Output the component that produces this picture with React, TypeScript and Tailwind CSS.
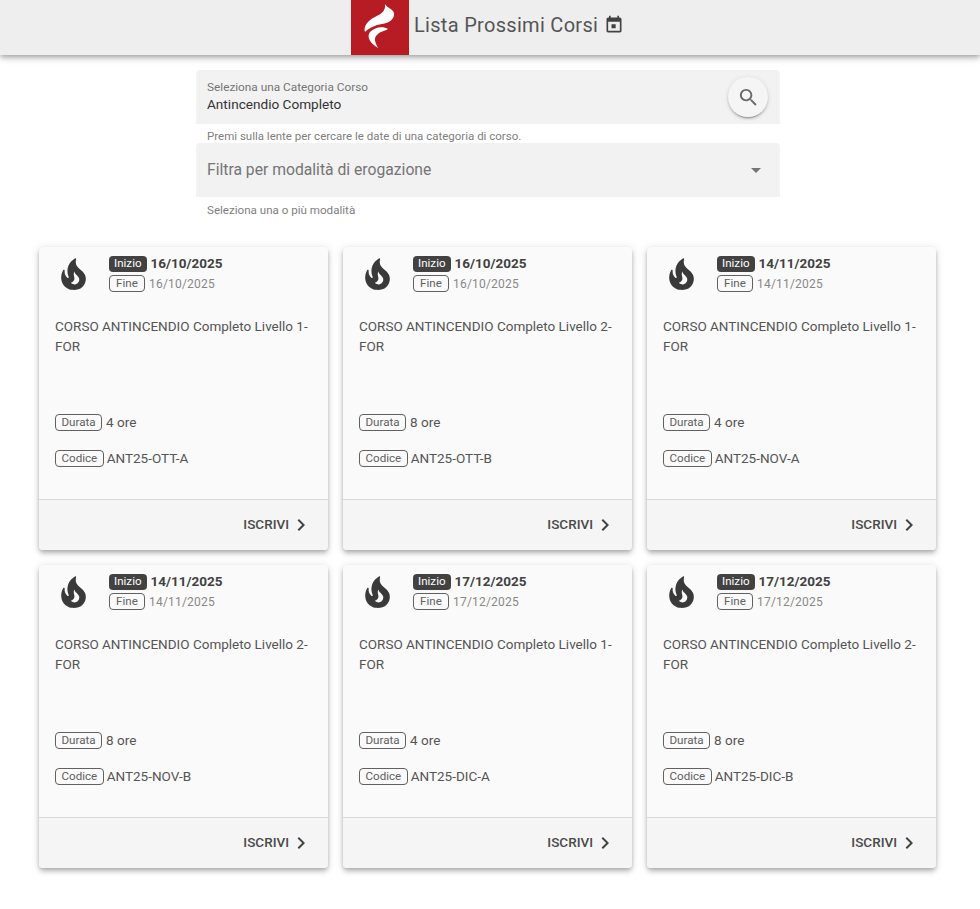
const FIRE = "M19.48,12.35c-1.57-4.08-7.16-4.3-5.81-10.23c0.1-0.44-0.37-0.78-0.75-0.55C9.29,3.71,6.68,8,8.87,13.62c0.18,0.46-0.36,0.89-0.75,0.59c-1.81-1.37-2-3.34-1.84-4.75c0.06-0.52-0.62-0.77-0.91-0.34C4.69,10.16,4,11.84,4,14.37c0.38,5.6,5.11,7.32,6.81,7.54c2.43,0.31,5.06-0.14,6.95-1.87C19.84,18.11,20.6,15.03,19.48,12.35z M10.2,17.38c1.44-0.35,2.18-1.39,2.38-2.31c0.33-1.43-0.96-2.83-0.09-5.09c0.33,1.87,3.27,3.04,3.27,5.08C15.84,17.59,13.1,19.76,10.2,17.38z";

const courses = [
  { start: "16/10/2025", level: 1, hours: 4, code: "ANT25-OTT-A" },
  { start: "16/10/2025", level: 2, hours: 8, code: "ANT25-OTT-B" },
  { start: "14/11/2025", level: 1, hours: 4, code: "ANT25-NOV-A" },
  { start: "14/11/2025", level: 2, hours: 8, code: "ANT25-NOV-B" },
  { start: "17/12/2025", level: 1, hours: 4, code: "ANT25-DIC-A" },
  { start: "17/12/2025", level: 2, hours: 8, code: "ANT25-DIC-B" },
];

function Tag({ children }: { children: React.ReactNode }) {
  return (
    <span className="inline-flex h-[17px] min-w-[36px] items-center justify-center rounded-[4px] border border-[#616161] px-[5.5px] text-[11.6px] leading-none text-[#616161]">
      {children}
    </span>
  );
}

function Card({ c }: { c: (typeof courses)[number] }) {
  return (
    <div className="flex h-[303px] flex-col rounded-[4px] bg-[#fafafa] shadow-[0_2px_4px_-1px_rgba(0,0,0,0.2),0_4px_5px_0_rgba(0,0,0,0.14),0_1px_10px_0_rgba(0,0,0,0.12)]">
      <div className="flex h-[252px] flex-col px-4">
        <div className="flex h-[61px] pt-[8px]">
          <svg viewBox="0 0 24 24" className="mt-[1px] h-[37px] w-[37px] shrink-0" fill="#3a3a3a">
            <path d={FIRE} />
          </svg>
          <div className="ml-[17px] flex flex-col gap-[3px]">
            <div className="flex h-[17px] items-center gap-[4px]">
              <span className="inline-flex h-[16px] items-center rounded-[4px] bg-[#424242] px-[5px] text-[11.6px] leading-none text-white">
                Inizio
              </span>
              <span className="text-[13.5px] font-bold leading-none text-[#424242]">{c.start}</span>
            </div>
            <div className="flex h-[17px] items-center gap-[4px]">
              <Tag>Fine</Tag>
              <span className="text-[12px] leading-none tracking-[0.2px] text-[#888888]">{c.start}</span>
            </div>
          </div>
        </div>
        <p className="mt-[8px] h-[98px] text-[13.5px] leading-[20px] text-[#555555]">
          {`CORSO ANTINCENDIO Completo Livello ${c.level}-FOR`}
        </p>
        <div className="flex h-[36px] items-start text-[13.5px] leading-[17px] text-[#555555]">
          <Tag>Durata</Tag>
          <span className="ml-[4px]">{`${c.hours} ore`}</span>
        </div>
        <div className="flex items-start text-[13.5px] leading-[17px] text-[#555555]">
          <Tag>Codice</Tag>
          <span className="ml-[3px]">{c.code}</span>
        </div>
      </div>
      <div className="flex h-[51px] items-center justify-end rounded-b-[4px] border-t border-[#d9d9d9] bg-[#f5f5f5] pr-[18px]">
        <span className="text-[13.5px] font-medium leading-none text-[#4a4a4a]">ISCRIVI</span>
        <svg viewBox="0 0 24 24" className="h-[24px] w-[24px] -mr-[3px]" fill="#424242">
          <path d="M10 6L8.59 7.41 13.17 12l-4.58 4.59L10 18l6-6z" />
        </svg>
      </div>
    </div>
  );
}

export default function App() {
  return (
    <div className="min-h-[909px] bg-white font-['Roboto',sans-serif]">
      <header className="flex h-[55px] items-stretch justify-center bg-[#eeeeee] shadow-[0_2px_4px_-1px_rgba(0,0,0,0.2),0_4px_5px_0_rgba(0,0,0,0.14),0_1px_10px_0_rgba(0,0,0,0.12)]">
        <div className="flex w-[980px] items-stretch pl-[351px]">
          <div className="flex w-[58px] items-center justify-center bg-[#b71c24]">
            <svg viewBox="0 0 58 55" className="h-[55px] w-[58px]" fill="white">
              <path d="M34 4C36 8 41 8 43 13C44 19 38 23 31 24C24 25 18 28 14 32C12 27 17 20 24 17C30 14 35 11 34 4z" />
              <path d="M37 29C32 26 24 27 19 32C15 37 20 44 27 48C24 42 22 38 27 34C30 31 34 31 37 29z" />
            </svg>
          </div>
          <div className="ml-[5px] flex items-center pb-[5px]">
            <span className="text-[20px] leading-none tracking-[0.3px] text-[#555555]">Lista Prossimi Corsi</span>
            <svg viewBox="0 0 24 24" className="ml-[6px] h-[20px] w-[20px]" fill="#424242">
              <path d="M19 3h-1V1h-2v2H8V1H6v2H5c-1.110 0-1.990.9-1.990 2L3 19c0 1.100.89 2 2 2h14c1.100 0 2-.9 2-2V5c0-1.100-.9-2-2-2zm0 16H5V8h14v11zM9 11h5v5H9z" />
            </svg>
          </div>
        </div>
      </header>

      <main>
        <div className="ml-[196px] w-[584px] pt-[15px]">
          <div className="relative h-[54px] rounded-t-[4px] bg-[#f2f2f2] px-[11px]">
            <div className="pt-[10px] text-[11.8px] leading-[14px] text-[#757575]">Seleziona una Categoria Corso</div>
            <div className="pt-[1px] text-[13.6px] leading-[18px] text-[#333333]">Antincendio Completo</div>
            <div className="absolute right-[12px] top-[7px] flex h-[40px] w-[40px] items-center justify-center rounded-full bg-[#f5f5f5] shadow-[0_3px_1px_-2px_rgba(0,0,0,0.2),0_2px_2px_0_rgba(0,0,0,0.14),0_1px_5px_0_rgba(0,0,0,0.12)]">
              <svg viewBox="0 0 24 24" className="h-[23px] w-[23px]" fill="#6b6b6b">
                <path d="M15.5 14h-.79l-.28-.27C15.41 12.590 16 11.110 16 9.500 16 5.910 13.090 3 9.500 3S3 5.910 3 9.500 5.910 16 9.500 16c1.610 0 3.090-.59 4.230-1.570l.27.28v.79l5 4.990L20.490 19l-4.990-5zm-6 0C7.010 14 5 11.990 5 9.500S7.010 5 9.500 5 14 7.010 14 9.500 11.990 14 9.500 14z" />
              </svg>
            </div>
          </div>
          <div className="h-[19px] px-[11px] pt-[6px] text-[11.5px] leading-[13px] text-[#808080]">
            Premi sulla lente per cercare le date di una categoria di corso.
          </div>
          <div className="flex h-[54px] items-center justify-between rounded-t-[4px] bg-[#f2f2f2] pl-[11px] pr-[19px]">
            <span className="text-[15.7px] leading-none text-[#757575]">Filtra per modalità di erogazione</span>
            <span className="h-0 w-0 border-x-[5px] border-t-[5px] border-x-transparent border-t-[#757575]" />
          </div>
          <div className="px-[11px] pt-[6px] text-[11.6px] leading-[14px] text-[#808080]">Seleziona una o più modalità</div>
        </div>

        <div className="mx-[39px] mt-[30px] grid grid-cols-[289px_289px_289px] gap-x-[15px] gap-y-[15px]">
          {courses.map((c) => (
            <Card key={c.code} c={c} />
          ))}
        </div>
      </main>
    </div>
  );
}
